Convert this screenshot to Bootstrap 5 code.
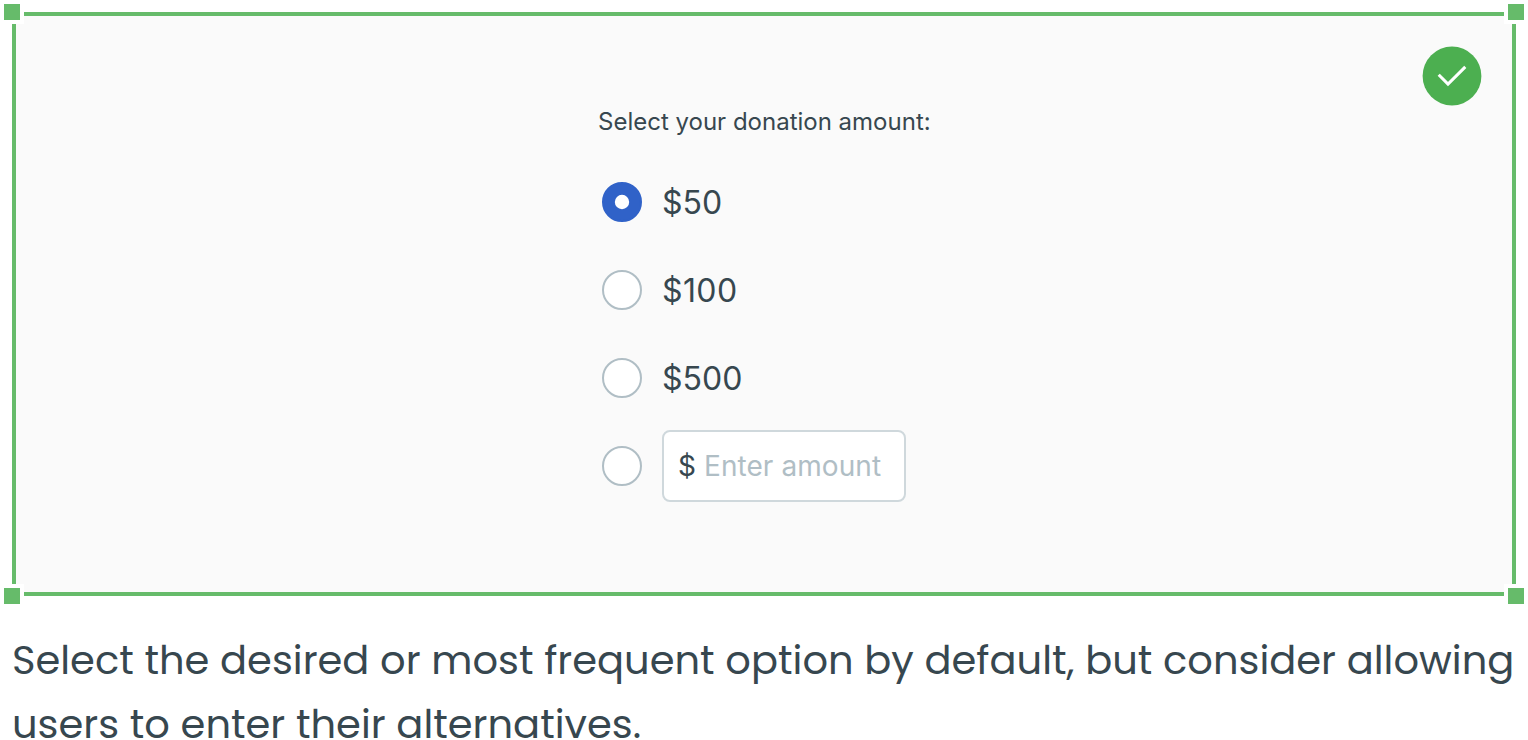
<!DOCTYPE html>
<html lang="en">
<head>
<meta charset="utf-8">
<meta name="viewport" content="width=device-width, initial-scale=1">
<title>Donation amount</title>
<link href="https://cdn.jsdelivr.net/npm/bootstrap@5.3.0/dist/css/bootstrap.min.css" rel="stylesheet">
<style>
  body { font-family: Inter, "Liberation Sans", sans-serif; color: #37474f; background: #fff; overflow: hidden; }
  .example { height: 584px; margin: 12px 12px 0; border: 4px solid #66bb6a; background: #fafafa; }
  /* corner handles sit over the frame's corners */
  .handle { position: absolute; width: 24px; height: 24px; background: #66bb6a; border: 4px solid #fff; }
  .handle-tl { top: -16px; left: -16px; }
  .handle-tr { top: -16px; right: -16px; }
  .handle-bl { bottom: -16px; left: -16px; }
  .handle-br { bottom: -16px; right: -16px; }
  .status { position: absolute; top: 30px; right: 30px; }
  .donation { width: 332px; padding-top: 88px; }
  .donation legend { font-size: 24px; line-height: 36px; margin-bottom: 18px; }
  .option { height: 88px; padding-left: 4px; gap: 20px; }
  .option .form-check-input { width: 40px; height: 40px; margin: 0; border: 2px solid #b0bec5; background-color: #fff; }
  .option .form-check-input:checked { border-color: #3062c8; background-color: #3062c8; background-size: 40px 40px;
    background-image: url("data:image/svg+xml,%3csvg xmlns='http://www.w3.org/2000/svg' viewBox='0 0 40 40'%3e%3ccircle cx='20' cy='20' r='7.2' fill='%23fff'/%3e%3c/svg%3e"); }
  .option label { font-size: 32px; line-height: 40px; padding-top: 1px; }
  .option label[for="a100"] { letter-spacing: .4px; }
  .amount { width: 244px; height: 72px; border: 2px solid #cfd8dc; border-radius: 8px; background: #fff; padding: 0 14px; font-size: 28px; }
  .amount input { font-size: 28px; color: #37474f; letter-spacing: .08px; outline: 0; }
  .amount input::placeholder { color: #b0bec5; opacity: 1; }
  .caption { font-family: Poppins, Inter, sans-serif; font-size: 40px; line-height: 64px; padding: 32px 0 0 12px; }
  .caption span { display: block; white-space: nowrap; }
</style>
</head>
<body>
<main>
  <section class="example position-relative d-flex justify-content-center">
    <i class="handle handle-tl"></i><i class="handle handle-tr"></i>
    <i class="handle handle-bl"></i><i class="handle handle-br"></i>
    <svg class="status" width="60" height="60" viewBox="0 0 60 60" aria-label="Recommended">
      <circle cx="30" cy="30" r="29.4" fill="#4caf50"/>
      <path d="M16.7 28.7 26 38.1 43.3 20.9" fill="none" stroke="#fff" stroke-width="3"/>
    </svg>
    <fieldset class="donation">
      <legend class="text-nowrap">Select your donation amount:</legend>
      <div class="option d-flex align-items-center">
        <input class="form-check-input" type="radio" name="amount" id="a50" checked><label for="a50">$50</label>
      </div>
      <div class="option d-flex align-items-center">
        <input class="form-check-input" type="radio" name="amount" id="a100"><label for="a100">$100</label>
      </div>
      <div class="option d-flex align-items-center">
        <input class="form-check-input" type="radio" name="amount" id="a500"><label for="a500">$500</label>
      </div>
      <div class="option d-flex align-items-center">
        <input class="form-check-input" type="radio" name="amount" id="other" aria-label="Other amount">
        <div class="amount d-flex align-items-center gap-2">
          <span>$</span><input class="border-0 p-0 bg-transparent w-100" type="text" placeholder="Enter amount" aria-label="Enter amount">
        </div>
      </div>
    </fieldset>
  </section>
  <p class="caption mb-0"><span>Select the desired or most frequent option by default, but consider allowing</span> <span>users to enter their alternatives.</span></p>
</main>
<script src="https://cdn.jsdelivr.net/npm/bootstrap@5.3.0/dist/js/bootstrap.bundle.min.js"></script>
</body>
</html>
